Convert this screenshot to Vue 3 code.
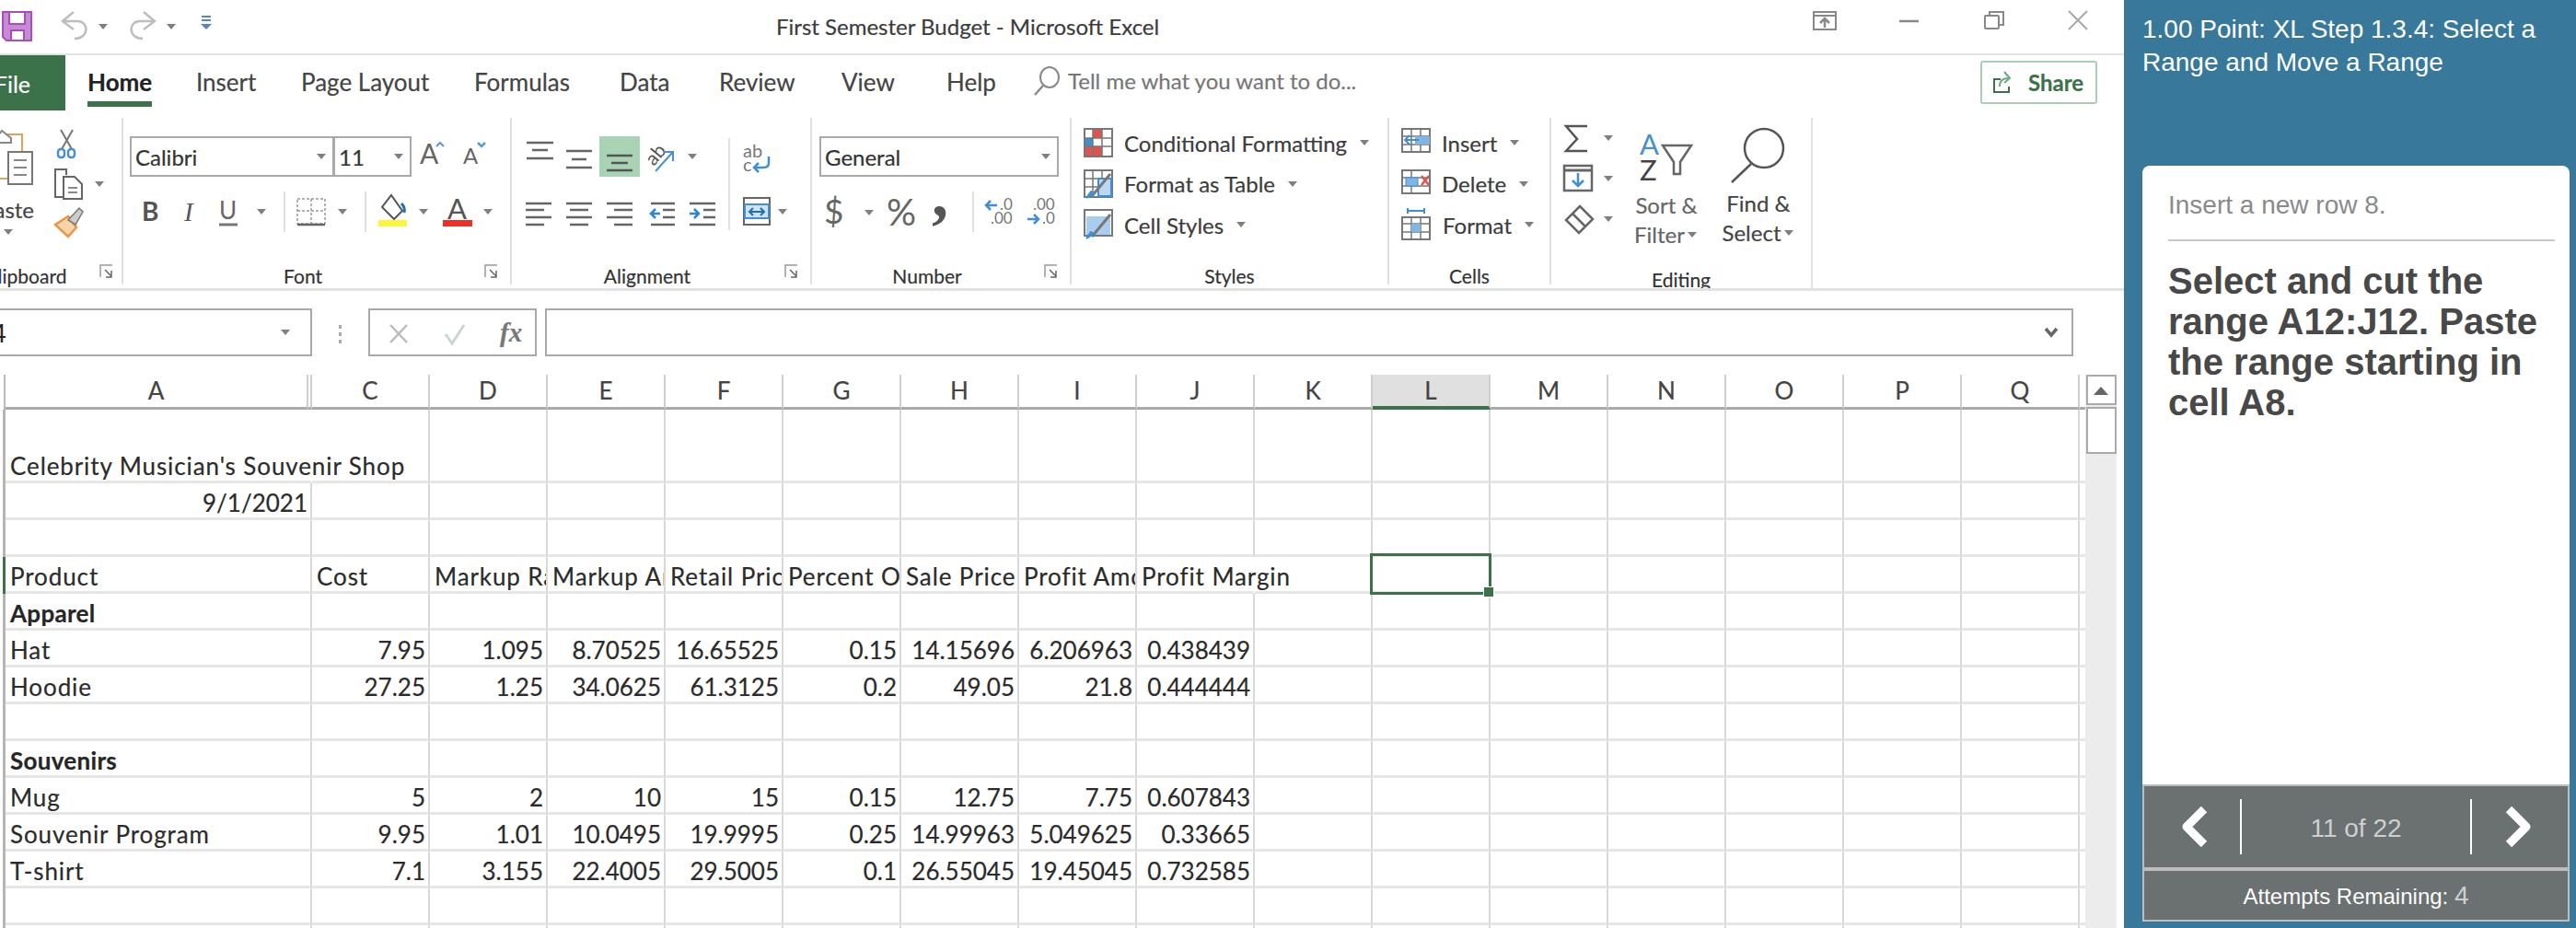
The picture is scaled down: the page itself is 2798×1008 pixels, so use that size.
<script setup>
import { h } from 'vue'

const Caret = (p) =>
  h('svg', { width: p.w || 14, height: 10, viewBox: `0 0 ${p.w || 14} 10`, fill: '#7f7f7f' }, [
    h('path', { d: `M${(p.w || 14) / 2 - 5} 2h10l-5 6z` })
  ])
Caret.props = ['w']

const tabs = ['Home', 'Insert', 'Page Layout', 'Formulas', 'Data', 'Review', 'View', 'Help']
const cols = ['C', 'D', 'E', 'F', 'G', 'H', 'I', 'J', 'K', 'L', 'M', 'N', 'O', 'P', 'Q']

const raw = [
  { tall: true, spill: 0, c: ["Celebrity Musician's Souvenir Shop"] },
  { c: ['9/1/2021'] },
  { c: [] },
  { spill: 8, sel: true, c: ['Product', 'Cost', 'Markup Rate', 'Markup Amount', 'Retail Price', 'Percent Off', 'Sale Price', 'Profit Amount', 'Profit Margin'] },
  { bold: true, c: ['Apparel'] },
  { c: ['Hat', '7.95', '1.095', '8.70525', '16.65525', '0.15', '14.15696', '6.206963', '0.438439'] },
  { c: ['Hoodie', '27.25', '1.25', '34.0625', '61.3125', '0.2', '49.05', '21.8', '0.444444'] },
  { c: [] },
  { bold: true, c: ['Souvenirs'] },
  { c: ['Mug', '5', '2', '10', '15', '0.15', '12.75', '7.75', '0.607843'] },
  { c: ['Souvenir Program', '9.95', '1.01', '10.0495', '19.9995', '0.25', '14.99963', '5.049625', '0.33665'] },
  { c: ['T-shirt', '7.1', '3.155', '22.4005', '29.5005', '0.1', '26.55045', '19.45045', '0.732585'] },
  { c: [] },
  { c: [] }
]
const rows = raw.map((r) => ({
  ...r,
  cells: Array.from({ length: 16 }, (_, i) => {
    const t = r.c[i] || ''
    return { t, num: /^[\d./]+$/.test(t), spill: r.spill === i, sel: r.sel && i === 10 }
  })
}))
</script>

<template>
  <div class="app">
    <main class="excel">
      <header class="titlebar">
        <div class="qat">
          <svg width="50" height="58" viewBox="0 0 50 58">
            <path d="M3 13h31v31H7l-4-4z" fill="#c88ad6" stroke="#a650b5" stroke-width="2" />
            <rect x="10" y="13" width="17" height="13" fill="#fff" stroke="#a650b5" stroke-width="2" />
            <rect x="12" y="33" width="14" height="11" fill="#fff" stroke="#a650b5" stroke-width="2" />
          </svg>
          <svg width="55" height="58" viewBox="50 0 55 58" fill="none" stroke="#bdbdbd" stroke-width="2.5">
            <path d="M80 13 68 23l12 9M68 23h16c13 0 13 19-3 19" />
          </svg>
          <Caret :w="14" />
          <svg class="redo" width="35" height="58" viewBox="135 0 35 58" fill="none" stroke="#bdbdbd" stroke-width="2.5">
            <path d="M156 13l12 10-12 9M168 23h-16c-13 0-13 19 3 19" />
          </svg>
          <Caret :w="14" class="qc2" />
          <svg class="cust" width="30" height="58" viewBox="209 0 30 58">
            <path d="M219 18h10M219 22h10" stroke="#5b84c4" stroke-width="2" />
            <path d="M218 26h12l-6 6z" fill="#5b84c4" />
          </svg>
        </div>
        <div class="doc-title">First Semester Budget - Microsoft Excel</div>
        <div class="winctl">
          <svg width="28" height="58" viewBox="1968 0 28 58" fill="none" stroke="#888" stroke-width="2">
            <rect x="1970" y="13" width="24" height="19" />
            <path d="M1970 17h24" />
            <path d="M1982 30v-10M1977 25l5-5 5 5" stroke-width="2.5" />
          </svg>
          <svg width="22" height="58" viewBox="2063 0 22 58" stroke="#888" stroke-width="2.5"><path d="M2063 23h21" /></svg>
          <svg width="24" height="58" viewBox="2154 0 24 58" fill="none" stroke="#888" stroke-width="2">
            <rect x="2156" y="17" width="15" height="14" rx="1" />
            <path d="M2161 17v-4h15v14h-5" />
          </svg>
          <svg width="24" height="58" viewBox="2245 0 24 58" stroke="#a8a8a8" stroke-width="2"><path d="M2247 12l20 20M2267 12l-20 20" /></svg>
        </div>
      </header>

      <nav class="tabs">
        <div class="file"><span>File</span></div>
        <div class="tabgrid">
          <span v-for="t in tabs" :key="t" class="tab"><span :class="{ on: t === 'Home' }">{{ t }}</span></span>
        </div>
        <svg width="37" height="60" viewBox="1123 60 37 60" fill="none" stroke="#8a8a8a" stroke-width="2">
          <ellipse cx="1140" cy="84" rx="10" ry="11" />
          <path d="M1133 93l-9 10" stroke-width="2.5" />
        </svg>
        <span class="tell">Tell me what you want to do...</span>
        <button class="share">
          <svg width="24" height="26" viewBox="2163 72 24 26" fill="none" stroke="#3b7249" stroke-width="2">
            <path d="M2172 82h-7v14h16v-6" />
            <path d="M2171 90c0-6 3-9 9-9M2176 74l6 7-6 5" stroke="#6fa581" />
          </svg>
          Share
        </button>
      </nav>

      <section class="ribbon">
        <div class="group g-clip">
          <div class="body clipbody">
            <div class="pastecol">
              <svg width="46" height="68" viewBox="0 136 46 68">
                <path d="M-8 146h32v48h-32" fill="#fff" stroke="#e0a35a" stroke-width="2" />
                <path d="M-4 150l6-8 10 8v5H-4z" fill="#fff" stroke="#888" stroke-width="2" />
                <rect x="9" y="165" width="26" height="35" fill="#fff" stroke="#777" stroke-width="2" />
                <path d="M15 174h14M15 182h14M15 190h14" stroke="#888" stroke-width="2" />
              </svg>
              <span class="pastelbl">Paste</span>
              <Caret :w="18" class="pastecaret" />
            </div>
            <div class="clipcol">
              <svg width="88" height="38" viewBox="46 138 88 38" fill="none">
                <path d="M66 141l12 21M79 141l-12 21" stroke="#777" stroke-width="2" />
                <rect x="63" y="162" width="7" height="9" rx="3" stroke="#4a90d0" stroke-width="2.5" />
                <rect x="74" y="162" width="7" height="9" rx="3" stroke="#4a90d0" stroke-width="2.5" />
              </svg>
              <div class="copyrow">
                <svg width="48" height="40" viewBox="46 180 48 40" fill="none" stroke="#666" stroke-width="2">
                  <path d="M72 190v-6H60v30h8" />
                  <path d="M69 192h12l8 8v16H69z" fill="#fff" />
                  <path d="M74 204h10M74 209h10" stroke="#8a8a8a" />
                </svg>
                <Caret :w="28" />
              </div>
              <svg width="88" height="36" viewBox="46 228 88 36">
                <path d="M60 248l14-9 9 12-9 10z" fill="#f7d3a8" stroke="#e8944a" stroke-width="2.5" />
                <path d="M74 243l12-13 4 4-8 14z" fill="#ccc" stroke="#777" stroke-width="1.5" />
              </svg>
            </div>
          </div>
          <div class="g-label clip-label">
            <span>Clipboard</span>
            <svg class="launch" width="25" height="30" viewBox="0 0 25 30" fill="none" stroke="#999" stroke-width="1.5">
              <path d="M2 22v-13h13" /><path d="M7 14l7 7M14 15v7H8" stroke="#666" />
            </svg>
          </div>
        </div>

        <div class="group g-font">
          <div class="body">
            <div class="row r1 pad7">
              <div class="combo w221"><span>Calibri</span><Caret :w="14" /></div>
              <div class="combo w85"><span>11</span><Caret :w="14" /></div>
              <svg width="107" height="44" viewBox="447 148 107 44">
                <text x="456" y="178" font-family="Lato, sans-serif" font-size="30" fill="#666">A</text>
                <path d="M474 159l4-4 4 4" fill="none" stroke="#5b9bd5" stroke-width="2" />
                <text x="503" y="178" font-family="Lato, sans-serif" font-size="24" fill="#666">A</text>
                <path d="M519 155l4 4 4-4" fill="none" stroke="#5b9bd5" stroke-width="2.5" />
              </svg>
            </div>
            <div class="row r2">
              <svg width="44" height="44" viewBox="134 208 44 44"><text x="154" y="240" font-family="Lato, sans-serif" font-weight="700" font-size="28" fill="#555">B</text></svg>
              <svg width="50" height="44" viewBox="178 208 50 44"><text x="200" y="240" font-family="'Liberation Serif', serif" font-style="italic" font-size="29" fill="#555">I</text></svg>
              <svg width="42" height="44" viewBox="228 208 42 44"><text x="238" y="238" font-family="Lato, sans-serif" font-size="26" fill="#666">U</text><path d="M238 244h20" stroke="#777" stroke-width="3" /></svg>
              <Caret :w="28" />
              <i class="sp10"></i><i class="sep"></i>
              <svg width="54" height="44" viewBox="310 208 54 44" fill="none">
                <path d="M323 216h30v27h-30zM338 216v27M323 229h30" stroke="#999" stroke-width="1.5" stroke-dasharray="3 2" />
                <path d="M323 244h30" stroke="#666" stroke-width="2.5" />
              </svg>
              <Caret :w="16" />
              <i class="sp16"></i><i class="sep"></i>
              <svg width="54" height="44" viewBox="398 208 54 44">
                <path d="M425 212l12 17-9 9-13-13z" fill="#fff" stroke="#555" stroke-width="2" />
                <path d="M436 221c3 3 4 6 3 10" fill="none" stroke="#1f6fb5" stroke-width="3" />
                <rect x="411" y="239" width="31" height="7" fill="#fdf53c" />
              </svg>
              <Caret :w="16" />
              <svg width="54" height="44" viewBox="468 208 54 44">
                <text x="486" y="238" font-family="Lato, sans-serif" font-size="31" fill="#555">A</text>
                <rect x="481" y="239" width="32" height="7" fill="#ee2f24" />
              </svg>
              <Caret :w="16" />
            </div>
          </div>
          <div class="g-label">
            <span>Font</span>
            <svg class="launch" width="30" height="30" viewBox="0 0 30 30" fill="none" stroke="#999" stroke-width="1.5">
              <path d="M3 22v-13h13" /><path d="M8 14l7 7M15 15v7H9" stroke="#666" />
            </svg>
          </div>
        </div>

        <div class="group g-align">
          <div class="body split">
            <div class="stack">
              <div class="row r1 pad12">
                <svg width="40" height="44" viewBox="568 148 40 44" stroke="#666" stroke-width="2.5"><path d="M572 155h29M578 163h17M572 172h29" /></svg>
                <svg width="43" height="44" viewBox="608 148 43 44" stroke="#666" stroke-width="2.5"><path d="M615 164h28M621 173h16M615 182h28" /></svg>
                <svg class="hl" width="44" height="44" viewBox="651 148 44 44" stroke="#555" stroke-width="2.5"><path d="M659 169h28M664 177h18M659 185h28" /></svg>
                <svg width="50" height="44" viewBox="695 148 50 44" fill="none">
                  <text x="701" y="175" font-family="Lato, sans-serif" font-size="21" fill="#555" transform="rotate(-50 712 168)">ab</text>
                  <path d="M712 186l19-21M721 165h10v10" stroke="#4a90d0" stroke-width="2" />
                </svg>
                <Caret :w="14" />
              </div>
              <div class="row r2 pad12">
                <svg width="43" height="44" viewBox="568 208 43 44" stroke="#666" stroke-width="2.5"><path d="M571 221h28M571 228h20M571 236h28M571 244h20" /></svg>
                <svg width="44" height="44" viewBox="611 208 44 44" stroke="#666" stroke-width="2.5"><path d="M615 221h28M619 228h20M615 236h28M619 244h20" /></svg>
                <svg width="48" height="44" viewBox="655 208 48 44" stroke="#666" stroke-width="2.5"><path d="M659 221h28M667 228h20M659 236h28M667 244h20" /></svg>
                <svg width="42" height="44" viewBox="703 208 42 44" fill="none" stroke="#666" stroke-width="2.5">
                  <path d="M707 221h26M720 228h13M720 236h13M707 244h26" />
                  <path d="M717 232h-9M712 227l-5 5 5 5" stroke="#2e86d0" />
                </svg>
                <svg width="38" height="44" viewBox="745 208 38 44" fill="none" stroke="#666" stroke-width="2.5">
                  <path d="M749 221h28M764 228h13M764 236h13M749 244h28" />
                  <path d="M749 232h9M754 227l5 5-5 5" stroke="#2e86d0" />
                </svg>
              </div>
            </div>
            <i class="sep tall sepalign"></i>
            <div class="stack wrapcol">
              <div class="row r1">
                <svg width="40" height="44" viewBox="803 148 40 44" fill="none">
                  <text x="807" y="171" font-family="Lato, sans-serif" font-size="20" fill="#777">ab</text>
                  <text x="807" y="186" font-family="Lato, sans-serif" font-size="20" fill="#777">c</text>
                  <path d="M835 170v7c0 4-3 5-6 5h-10M824 177l-5 5 5 5" stroke="#3f8fd6" stroke-width="2.5" />
                </svg>
              </div>
              <div class="row r2">
                <svg width="40" height="44" viewBox="803 208 40 44" fill="none">
                  <rect x="808" y="215" width="28" height="29" stroke="#666" stroke-width="2" />
                  <rect x="809" y="222" width="26" height="15" fill="#cfe3f5" stroke="#3f8fd6" stroke-width="2" />
                  <path d="M814 230h16M818 226l-4 4 4 4M826 226l4 4-4 4" stroke="#1f6fb5" stroke-width="2" />
                </svg>
                <Caret :w="14" />
              </div>
            </div>
          </div>
          <div class="g-label">
            <span>Alignment</span>
            <svg class="launch" width="30" height="30" viewBox="0 0 30 30" fill="none" stroke="#999" stroke-width="1.5">
              <path d="M3 22v-13h13" /><path d="M8 14l7 7M15 15v7H9" stroke="#666" />
            </svg>
          </div>
        </div>

        <div class="group g-num">
          <div class="body">
            <div class="row r1 pad8">
              <div class="combo w260"><span>General</span><Caret :w="14" /></div>
            </div>
            <div class="row r2">
              <svg width="174" height="44" viewBox="882 208 174 44">
                <text x="895" y="243" font-family="Lato, sans-serif" font-size="37" fill="#666">$</text>
                <path d="M939 228h10l-5 6z" fill="#7f7f7f" />
                <text x="963" y="245" font-family="Lato, sans-serif" font-size="40" fill="#666">%</text>
                <text x="1012" y="235" font-family="'Liberation Serif', serif" font-weight="700" font-size="72" fill="#555">,</text>
              </svg>
              <i class="sep"></i>
              <svg width="102" height="44" viewBox="1058 208 102 44" fill="none">
                <path d="M1083 223h-12M1076 218l-5 5 5 5" stroke="#3f8fd6" stroke-width="2.5" />
                <text x="1086" y="228" font-family="Lato, sans-serif" font-size="17" fill="#777">.0</text>
                <text x="1076" y="243" font-family="Lato, sans-serif" font-size="17" fill="#777">.00</text>
                <text x="1122" y="228" font-family="Lato, sans-serif" font-size="17" fill="#777">.00</text>
                <path d="M1116 238h12M1123 233l5 5-5 5" stroke="#3f8fd6" stroke-width="2.5" />
                <text x="1132" y="243" font-family="Lato, sans-serif" font-size="17" fill="#777">.0</text>
              </svg>
            </div>
          </div>
          <div class="g-label">
            <span>Number</span>
            <svg class="launch" width="30" height="30" viewBox="0 0 30 30" fill="none" stroke="#999" stroke-width="1.5">
              <path d="M3 22v-13h13" /><path d="M8 14l7 7M15 15v7H9" stroke="#666" />
            </svg>
          </div>
        </div>

        <div class="group g-styles">
          <div class="body listbody">
            <div class="li">
              <svg width="32" height="34" viewBox="1177 139 32 34" fill="none">
                <rect x="1178" y="141" width="30" height="30" stroke="#777" stroke-width="2" />
                <rect x="1187" y="142" width="10" height="9" fill="#e2504f" />
                <rect x="1179" y="160" width="18" height="10" fill="#e2504f" />
                <rect x="1179" y="151" width="8" height="9" fill="#3f8fd6" />
                <path d="M1178 151h30M1178 160h30M1187 141v30M1197 141v30" stroke="#777" stroke-width="1.5" />
              </svg>
              <span>Conditional Formatting</span><Caret :w="14" />
            </div>
            <div class="li">
              <svg width="32" height="34" viewBox="1177 184 32 34" fill="none">
                <rect x="1178" y="186" width="30" height="29" stroke="#777" stroke-width="2" />
                <path d="M1178 195h30M1178 204h15M1187 186v28M1197 186v10" stroke="#777" stroke-width="1.5" />
                <rect x="1193" y="195" width="14" height="19" fill="#bcd8f1" stroke="#3f8fd6" stroke-width="2" />
                <path d="M1186 214l20-24" stroke="#777" stroke-width="3" />
                <path d="M1180 216l8-5-3-2z" fill="#3f8fd6" stroke="#3f8fd6" stroke-width="2" />
              </svg>
              <span>Format as Table</span><Caret :w="14" />
            </div>
            <div class="li">
              <svg width="32" height="34" viewBox="1177 228 32 34" fill="none">
                <rect x="1178" y="229" width="30" height="28" stroke="#777" stroke-width="2" />
                <rect x="1180" y="236" width="26" height="20" fill="#a8cdef" />
                <path d="M1186 258l20-24" stroke="#777" stroke-width="3" />
                <path d="M1180 260l8-5-3-2z" fill="#3f8fd6" stroke="#3f8fd6" stroke-width="2" />
              </svg>
              <span>Cell Styles</span><Caret :w="14" />
            </div>
          </div>
          <div class="g-label"><span>Styles</span></div>
        </div>

        <div class="group g-cells">
          <div class="body listbody">
            <div class="li">
              <svg width="32" height="34" viewBox="1522 138 32 34" fill="none">
                <rect x="1523" y="140" width="30" height="25" stroke="#777" stroke-width="2" />
                <path d="M1523 148h30M1523 157h30M1533 140v25M1543 140v25" stroke="#777" stroke-width="1.5" />
                <rect x="1537" y="148" width="16" height="9" fill="#7fb6e6" />
                <path d="M1541 152h-15M1531 147l-5 5 5 5" stroke="#3f8fd6" stroke-width="2" />
              </svg>
              <span>Insert</span><Caret :w="14" />
            </div>
            <div class="li">
              <svg width="32" height="34" viewBox="1522 182 32 34" fill="none">
                <rect x="1523" y="184" width="30" height="25" stroke="#777" stroke-width="2" />
                <path d="M1523 192h30M1523 201h30M1533 184v25" stroke="#777" stroke-width="1.5" />
                <rect x="1527" y="192" width="13" height="9" fill="#7fb6e6" stroke="#3f8fd6" />
                <path d="M1544 190l8 10M1552 190l-8 10" stroke="#e2504f" stroke-width="2.5" />
              </svg>
              <span>Delete</span><Caret :w="14" />
            </div>
            <div class="li">
              <svg width="32" height="36" viewBox="1522 226 32 36" fill="none">
                <path d="M1529 229h18M1529 226v6M1547 226v6" stroke="#3f8fd6" stroke-width="2" />
                <rect x="1523" y="236" width="30" height="24" stroke="#777" stroke-width="2" />
                <path d="M1523 243h30M1523 252h30M1533 236v24M1543 236v24" stroke="#777" stroke-width="1.5" />
                <rect x="1533" y="243" width="10" height="9" fill="#7fb6e6" />
              </svg>
              <span class="fmt">Format</span><Caret :w="14" />
            </div>
          </div>
          <div class="g-label"><span>Cells</span></div>
        </div>

        <div class="group g-edit">
          <div class="body editbody">
            <div class="sumcol">
              <div class="sumrow">
                <svg width="42" height="36" viewBox="1697 132 42 36" fill="none" stroke="#555" stroke-width="2.5"><path d="M1724 137h-23l12 14-12 13h23" /></svg>
                <Caret :w="16" />
              </div>
              <div class="sumrow">
                <svg width="42" height="36" viewBox="1697 175 42 36" fill="none">
                  <rect x="1699" y="179" width="30" height="27" stroke="#666" stroke-width="2.5" />
                  <path d="M1699 184h30" stroke="#666" stroke-width="3" />
                  <path d="M1714 187v14M1708 195l6 6 6-6" stroke="#3f8fd6" stroke-width="2.5" />
                </svg>
                <Caret :w="16" />
              </div>
              <div class="sumrow">
                <svg width="42" height="36" viewBox="1697 220 42 36" fill="none" stroke="#666" stroke-width="2.5">
                  <path d="M1716 224l14 14-15 15-14-14zM1708 232l14 14" />
                </svg>
                <Caret :w="16" />
              </div>
            </div>
            <div class="bigcol sort">
              <svg class="bigicon" width="60" height="62" viewBox="1780 140 60 62" fill="none">
                <text x="1781" y="168" font-family="Lato, sans-serif" font-size="31" fill="#4a90d0">A</text>
                <text x="1781" y="196" font-family="Lato, sans-serif" font-size="31" fill="#444">Z</text>
                <path d="M1806 158h31l-12 18v13h-7v-13z" stroke="#666" stroke-width="2.5" />
              </svg>
              <span class="bl">Sort &amp;</span>
              <span class="bl">Filter<Caret :w="14" class="incaret" /></span>
            </div>
            <div class="bigcol find">
              <svg class="bigicon" width="64" height="62" viewBox="1878 138 64 62" fill="none" stroke="#555" stroke-width="2.5">
                <circle cx="1916" cy="161" r="21" />
                <path d="M1902 178l-21 20" />
              </svg>
              <span class="bl">Find &amp;</span>
              <span class="bl">Select<Caret :w="14" class="incaret" /></span>
            </div>
          </div>
          <div class="g-label edit-label"><span>Editing</span></div>
        </div>
      </section>

      <section class="formula">
        <div class="namebox"><span class="nm">4</span><Caret :w="18" /></div>
        <svg width="61" height="52" viewBox="339 334 61 52" fill="#aaa">
          <rect x="368" y="352" width="3" height="4" /><rect x="368" y="360" width="3" height="4" /><rect x="368" y="368" width="3" height="4" />
        </svg>
        <div class="fxbox">
          <svg width="60" height="48" viewBox="402 336 60 48" stroke="#bbb" stroke-width="2.5" fill="none"><path d="M424 352l18 19M442 352l-18 19" /></svg>
          <svg width="60" height="48" viewBox="462 336 60 48" stroke="#c9d6d6" stroke-width="3" fill="none"><path d="M484 362l7 10 13-20" /></svg>
          <span class="fx">fx</span>
        </div>
        <div class="fxinput">
          <svg width="18" height="14" viewBox="0 0 18 14" fill="none" stroke="#666" stroke-width="3.5"><path d="M3 3l6 7 6-7" /></svg>
        </div>
      </section>

      <section class="sheet">
        <div class="grid">
          <div class="hdr">
            <div class="hgut"></div>
            <div class="hcell ha">A</div>
            <div class="hcell hb"></div>
            <div v-for="c in cols" :key="c" class="hcell" :class="{ act: c === 'L' }">{{ c }}</div>
            <div class="hcell hend"></div>
          </div>
          <div v-for="(r, ri) in rows" :key="ri" class="rw" :class="{ tall: r.tall, bold: r.bold }">
            <div class="gut" :class="{ gactive: r.sel }"></div>
            <div
              v-for="(c, ci) in r.cells"
              :key="ci"
              class="cell"
              :class="{ first: ci === 0, num: c.num, spill: c.spill, nob: (r.spill === 8 && ci === 8) || (r.spill === 0 && ci === 0) }"
            >
              {{ c.t }}
              <div v-if="c.sel" class="selbox"><i class="handle"></i></div>
            </div>
            <div class="cell endc"></div>
          </div>
        </div>
        <aside class="vscroll">
          <div class="up"><svg width="20" height="12" viewBox="0 0 20 12" fill="#666"><path d="M2 11h16L10 2z" /></svg></div>
          <div class="thumb"></div>
        </aside>
      </section>
    </main>

    <aside class="panel">
      <div class="ptitle">1.00 Point: XL Step 1.3.4: Select a Range and Move a Range</div>
      <div class="card">
        <div class="cbody">
          <div class="done">Insert a new row 8.</div>
          <div class="step">Select and cut the range A12:J12. Paste the range starting in cell A8.</div>
        </div>
        <div class="nav">
          <button class="arrow la">
            <svg width="32" height="48" viewBox="0 0 32 48" fill="none" stroke="#fff" stroke-width="9" stroke-linejoin="round"><path d="M26 5 7 24l19 19" /></svg>
          </button>
          <div class="count">11 of 22</div>
          <button class="arrow ra">
            <svg width="32" height="48" viewBox="0 0 32 48" fill="none" stroke="#fff" stroke-width="9" stroke-linejoin="round"><path d="M6 5l19 19L6 43" /></svg>
          </button>
        </div>
        <div class="attempts">Attempts Remaining: <b>4</b></div>
      </div>
    </aside>
  </div>
</template>

<style>
html, body { margin: 0; background: #fff; overflow: hidden; }
</style>

<style scoped>
.app { display: flex; width: 2798px; height: 1008px; overflow: hidden; background: #fff; }
.excel { width: 2307px; flex: none; display: flex; flex-direction: column; overflow: hidden; font-family: Lato, "Open Sans", sans-serif; color: #444; -webkit-text-stroke: 0.2px; }
svg { display: block; flex: none; }
i { display: block; flex: none; }

.titlebar { height: 58px; flex: none; border-bottom: 2px solid #e2e2e2; display: grid; grid-template-columns: 843px auto 1fr; align-items: center; }
.qat { display: flex; align-items: center; }
.redo { margin-left: 16px; }
.qc2 { margin-left: 9px; }
.cust { margin-left: 16px; }
.doc-title { font-size: 24px; color: #3c3c3c; white-space: nowrap; margin-top: -2px; }
.winctl { display: flex; justify-content: flex-end; padding-right: 38px; }
.winctl svg:nth-child(1) { margin-right: 67px; }
.winctl svg:nth-child(2) { margin-right: 69px; }
.winctl svg:nth-child(3) { margin-right: 67px; }

.tabs { height: 60px; flex: none; display: flex; align-items: center; }
.file { width: 71px; height: 60px; margin-right: 24px; background: #3b7249; color: #fff; font-size: 25px; line-height: 62px; flex: none; display: flex; justify-content: flex-end; padding-right: 38px; box-sizing: border-box; }
.tabgrid { display: grid; grid-template-columns: 118px 114px 188px 158px 108px 133px 114px 95px; flex: none; }
.tab { font-size: 26px; line-height: 58px; color: #444; white-space: nowrap; height: 60px; }
.tab .on { display: inline-block; vertical-align: top; height: 56px; box-sizing: border-box; color: #222; font-weight: 700; border-bottom: 6px solid #3b7249; }
.tell { font-size: 24px; color: #777; line-height: 56px; width: 991px; flex: none; height: 60px; white-space: nowrap; }
.share { width: 127px; height: 47px; margin-top: -2px; display: flex; align-items: center; gap: 15px; padding: 0 0 0 11px; background: #fff; border: 2px solid #a9d0b5; border-radius: 3px; box-sizing: border-box; font: 700 24px Lato, sans-serif; color: #3b7249; flex: none; white-space: nowrap; }

.ribbon { height: 193px; flex: none; display: flex; border-bottom: 3px solid #e2e2e2; box-sizing: content-box; }
.group { margin-top: 8px; height: 181px; box-sizing: border-box; border-right: 2px solid #e0e0e0; display: flex; flex-direction: column; flex: none; }
.g-clip { width: 134px; }
.g-font { width: 422px; }
.g-align { width: 326px; }
.g-num { width: 282px; }
.g-styles { width: 345px; }
.g-cells { width: 176px; }
.g-edit { width: 284px; height: 185px; }
.body { padding-top: 20px; height: 125px; box-sizing: content-box; }
.row { display: flex; align-items: center; height: 44px; }
.r2 { margin-top: 16px; }
.pad7 { padding-left: 7px; }
.pad8 { padding-left: 8px; }
.pad12 { padding-left: 12px; }
.g-label { height: 24px; margin-top: auto; margin-bottom: 0; display: flex; font-size: 21px; line-height: 30px; color: #333; white-space: nowrap; }
.g-label span { flex: 1; text-align: center; }
.launch { margin-top: -6px; width: 30px; }
.clip-label { justify-content: flex-start; }
.clip-label span { flex: none; width: 92px; margin-left: -18px; }
.clip-label .launch { margin-left: 33px; width: 25px; }
.edit-label { overflow: hidden; }

.clipbody { display: flex; padding-top: 8px; }
.pastecol { width: 46px; flex: none; display: flex; flex-direction: column; align-items: flex-end; }
.pastelbl { font-size: 24px; line-height: 32px; margin-right: 9px; margin-top: 8px; white-space: nowrap; }
.pastecaret { margin-right: 28px; margin-top: 3px; }
.clipcol { display: flex; flex-direction: column; gap: 4px; margin-top: 2px; }
.copyrow { display: flex; align-items: center; }

.combo { height: 44px; box-sizing: border-box; border: 2px solid #a9a9a9; display: flex; align-items: center; justify-content: space-between; padding: 0 5px 0 4px; font-size: 24px; color: #333; flex: none; }
.w221 { width: 222px; }
.w85 { width: 85px; margin-left: -1px; }
.w260 { width: 260px; }
.sep { width: 2px; height: 44px; background: #e0e0e0; }
.sp10 { width: 10px; }
.sp16 { width: 16px; }

.split { display: flex; }
.stack { width: 235px; flex: none; }
.sepalign { height: 100px; margin-top: 2px; }
.wrapcol { width: 87px; padding-left: 10px; box-sizing: border-box; }
.hl { background: #a8d3b5; }

.listbody { padding-top: 5px; }
.li { height: 44.5px; display: flex; align-items: center; padding-left: 13px; font-size: 24px; color: #3c3c3c; white-space: nowrap; }
.li span { margin-left: 12px; margin-right: 12px; }
.li .fmt { margin-left: 13px; }

.editbody { display: flex; padding-top: 0; }
.sumcol { width: 75px; flex: none; padding-left: 12px; box-sizing: border-box; padding-top: 4px; display: flex; flex-direction: column; gap: 8px; }
.sumrow { display: flex; align-items: center; height: 36px; }
.bigcol { width: 100px; flex: none; display: flex; flex-direction: column; align-items: center; font-size: 24px; line-height: 32px; white-space: nowrap; }
.bigicon { margin-bottom: 5px; }
.sort { color: #666; padding-top: 12px; }
.find { color: #444; padding-top: 10px; }
.bl { display: flex; align-items: center; }
.incaret { margin-left: 1px; }

.formula { height: 91px; flex: none; box-sizing: border-box; padding-top: 19px; display: flex; align-items: flex-start; }
.namebox { width: 343px; margin-left: -4px; height: 52px; flex: none; box-sizing: border-box; border: 2px solid #a9a9a9; display: flex; align-items: center; justify-content: space-between; padding-right: 18px; font-size: 27px; color: #222; }
.nm { margin-left: -7px; }
.fxbox { width: 183px; height: 52px; flex: none; box-sizing: border-box; border: 2px solid #a9a9a9; display: flex; align-items: center; margin-right: 9px; }
.fx { font-family: "Liberation Serif", serif; font-style: italic; font-weight: 700; font-size: 29px; color: #777; margin-left: 21px; }
.fxinput { width: 1660px; height: 52px; flex: none; box-sizing: border-box; border: 2px solid #a9a9a9; display: flex; align-items: center; justify-content: flex-end; padding-right: 13px; }

.sheet { flex: 1; display: flex; min-height: 0; overflow: hidden; }
.grid { width: 2265px; flex: none; }
.hdr, .rw { display: grid; grid-template-columns: 6px 333px repeat(15, 128px) 6px; }
.hdr { grid-template-columns: 6px 329px 4px repeat(15, 128px) 6px; height: 38px; }
.hgut { border-right: 2px solid #bbb; }
.hcell { border-right: 2px solid #cfcfcf; border-bottom: 3px solid #aaa; height: 38px; box-sizing: border-box; text-align: center; font-size: 26px; line-height: 34px; color: #444; overflow: hidden; }
.hend { border-right: 0; }
.act { background: #e0e0e0; border-bottom-color: #3b7249; border-bottom-width: 4px; }
.rw { height: 40px; }
.rw.tall { height: 80px; }
.gut { border-right: 3px solid #b5b5b5; box-sizing: border-box; }
.gactive { border-right-color: #3b7249; }
.cell { position: relative; box-sizing: border-box; border-right: 2px solid #d8d8d8; border-bottom: 3px solid #e6e6e6; padding: 0 3px 0 5px; font-size: 26px; line-height: 32px; color: #2b2b2b; white-space: nowrap; overflow: hidden; display: flex; align-items: flex-end; letter-spacing: 0.9px; }
.num { justify-content: flex-end; letter-spacing: 0; }
.spill { overflow: visible; }
.nob { border-right-color: transparent; }
.bold .cell { font-weight: 700; color: #262626; letter-spacing: 0.3px; }
.endc { border-right: 0; padding: 0; }
.cell:has(.selbox) { overflow: visible; }
.selbox { position: absolute; left: -3px; right: -3px; top: -4px; bottom: -4px; border: 3px solid #3b7249; z-index: 3; }
.handle { position: absolute; right: -6px; bottom: -6px; width: 12px; height: 12px; background: #3b7249; border: 1px solid #fff; box-sizing: border-box; }

.vscroll { width: 34px; flex: none; background: #ececec; display: flex; flex-direction: column; align-items: center; }
.up { width: 33px; height: 33px; box-sizing: border-box; border: 2px solid #aaa; background: #fff; display: flex; align-items: center; justify-content: center; }
.thumb { width: 33px; height: 51px; box-sizing: border-box; border: 2px solid #aaa; background: #fff; margin-top: 2px; }

.panel { width: 491px; flex: none; background: #37789b; font-family: "Liberation Sans", Arial, sans-serif; display: flex; flex-direction: column; }
.ptitle { height: 180px; box-sizing: border-box; padding: 14px 20px 0 20px; font-size: 28px; line-height: 36px; color: #fff; flex: none; }
.card { margin: 0 7px 7px 20px; flex: 1; background: #fff; border-radius: 8px 8px 0 0; display: flex; flex-direction: column; overflow: hidden; }
.cbody { flex: 1; padding: 0 16px 0 28px; }
.done { height: 82px; box-sizing: border-box; padding-top: 25px; line-height: 36px; font-size: 28px; color: #8a8a8a; border-bottom: 2px solid #c8c8c8; }
.step { margin-top: 21px; font-size: 40px; font-weight: 700; line-height: 44px; color: #484848; }
.nav { height: 94px; flex: none; box-sizing: border-box; border: 2px solid #bdbdbd; border-bottom: 4px solid #bdbdbd; background: #6b7070; display: flex; align-items: center; }
.arrow { width: 106px; height: 60px; background: none; border: 0; padding: 0; display: flex; align-items: center; justify-content: center; flex: none; box-sizing: border-box; }
.la { border-right: 2px solid #fff; padding-left: 5px; }
.ra { border-left: 2px solid #fff; padding-right: 5px; }
.count { flex: 1; text-align: center; font-size: 28px; line-height: 34px; padding-top: 4px; color: #cfcfcf; }
.attempts { height: 55px; flex: none; box-sizing: border-box; border: 2px solid #bdbdbd; border-top: 0; background: #6b7070; color: #fff; font-size: 24px; line-height: 54px; text-align: center; }
.attempts b { font-weight: 400; font-size: 28px; color: #cfcfcf; }
</style>
